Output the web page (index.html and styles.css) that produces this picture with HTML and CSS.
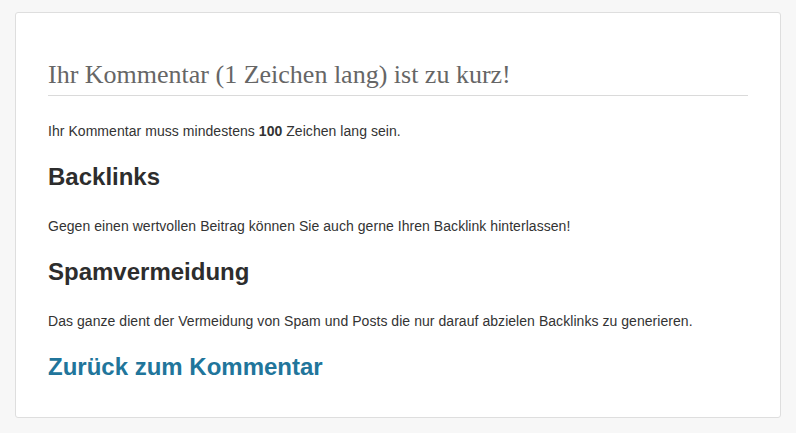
FILE: index.html
```html
<!DOCTYPE html>
<html lang="de">
<head>
<meta charset="utf-8">
<title>Kommentar zu kurz</title>
<link rel="stylesheet" href="styles.css">
</head>
<body>
<div class="page">
  <div class="card">
    <h1 class="title">Ihr Kommentar (1 Zeichen lang) ist zu kurz!</h1>
    <p class="text">Ihr Kommentar muss mindestens <strong>100</strong> Zeichen lang sein.</p>
    <h2 class="heading">Backlinks</h2>
    <p class="text">Gegen einen wertvollen Beitrag können Sie auch gerne Ihren Backlink hinterlassen!</p>
    <h2 class="heading">Spamvermeidung</h2>
    <p class="text">Das ganze dient der Vermeidung von Spam und Posts die nur darauf abzielen Backlinks zu generieren.</p>
    <h2 class="heading"><a class="back" href="#">Zurück zum Kommentar</a></h2>
  </div>
</div>
</body>
</html>
```
FILE: styles.css
```css
html, body {
  margin: 0;
  padding: 0;
  background: #f7f7f7;
}
.page {
  padding: 12px 15px 15px;
}
.card {
  background: #fff;
  border: 1px solid #dedede;
  border-radius: 3px;
  padding: 16px 32px 16px;
  color: #333;
  font-family: "Liberation Sans", Arial, sans-serif;
  display: flow-root;
}
.title {
  font-family: "Liberation Serif", "Times New Roman", serif;
  font-weight: normal;
  font-size: 26px;
  line-height: 27px;
  color: #666;
  margin: 32px 0 0;
  padding-bottom: 7px;
  border-bottom: 1px solid #dadada;
}
.text {
  font-size: 14px;
  line-height: 21px;
  letter-spacing: 0.05px;
  margin: 25px 0 20px;
  color: #333;
}
.heading {
  font-size: 24px;
  line-height: 29px;
  font-weight: bold;
  color: #2d2d2d;
  margin: 20px 0;
}
.back {
  color: #21759b;
  text-decoration: none;
}
```
